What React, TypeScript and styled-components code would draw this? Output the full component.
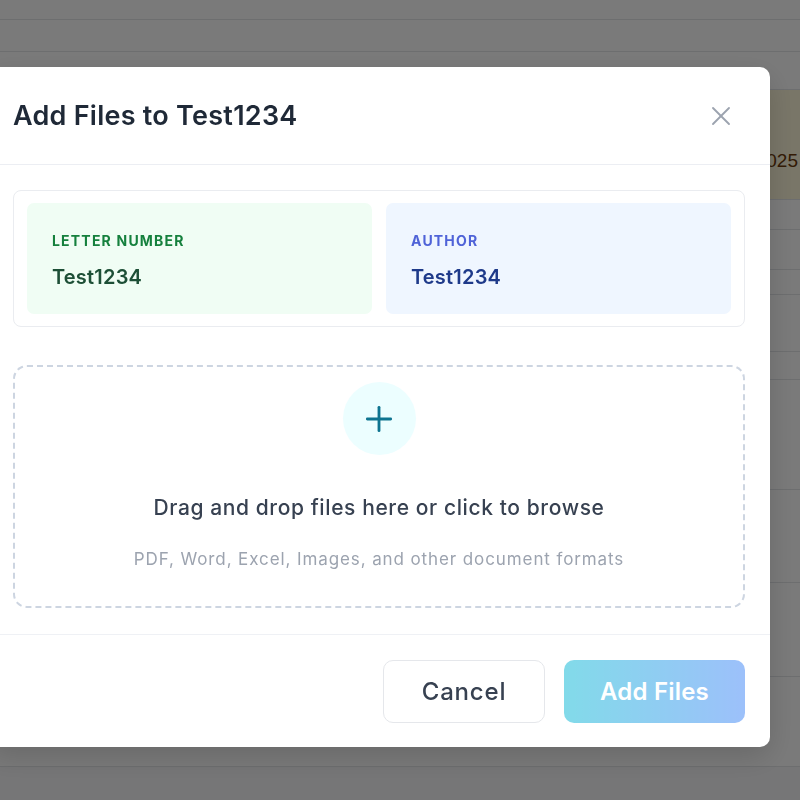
import styled, { createGlobalStyle } from 'styled-components'
import { X, Plus } from 'lucide-react'

const GlobalStyle = createGlobalStyle`
  html, body {
    margin: 0;
    padding: 0;
    overflow: hidden;
    background: #ffffff;
    font-family: "Inter", "Noto Sans", sans-serif;
  }
  * {
    box-sizing: border-box;
  }
`

const rows = [
  { h: 20 },
  { h: 32 },
  { h: 38 },
  { h: 110, highlight: true, date: 'Jan 12, 2025' },
  { h: 30 },
  { h: 40 },
  { h: 25 },
  { h: 57 },
  { h: 28 },
  { h: 110 },
  { h: 93 },
  { h: 94 },
  { h: 90 },
]

export default function App() {
  return (
    <>
      <GlobalStyle />
      <Table>
        {rows.map((r, i) => (
          <Row key={i} $h={r.h} $highlight={r.highlight}>
            {r.date && <DateCell>{r.date}</DateCell>}
          </Row>
        ))}
        <FooterRow />
      </Table>

      <Overlay>
        <Modal>
          <Header>
            <Title>Add Files to Test1234</Title>
            <CloseButton aria-label="Close">
              <X size={32} strokeWidth={1.4} />
            </CloseButton>
          </Header>

          <Body>
            <InfoCard>
              <InfoCell $tone="green">
                <InfoLabel $tone="green">Letter Number</InfoLabel>
                <InfoValue $tone="green">Test1234</InfoValue>
              </InfoCell>
              <InfoCell $tone="blue">
                <InfoLabel $tone="blue">Author</InfoLabel>
                <InfoValue $tone="blue">Test1234</InfoValue>
              </InfoCell>
            </InfoCard>

            <DropZone>
              <PlusCircle>
                <Plus size={40} strokeWidth={1.7} />
              </PlusCircle>
              <DropTitle>Drag and drop files here or click to browse</DropTitle>
              <DropHint>PDF, Word, Excel, Images, and other document formats</DropHint>
            </DropZone>
          </Body>

          <Footer>
            <CancelButton>Cancel</CancelButton>
            <SubmitButton disabled>Add Files</SubmitButton>
          </Footer>
        </Modal>
      </Overlay>
    </>
  )
}

type Tone = 'green' | 'blue'

const tones = {
  green: { bg: '#f0fdf4', label: '#15803d', value: '#1d4f36' },
  blue: { bg: '#eff6ff', label: '#4f63d8', value: '#1e3a8a' },
}

const Table = styled.div`
  display: flex;
  flex-direction: column;
  width: 100%;
  height: 100vh;
`

const Row = styled.div<{ $h: number; $highlight?: boolean }>`
  flex: 0 0 ${p => p.$h}px;
  display: flex;
  justify-content: flex-end;
  align-items: flex-end;
  padding-bottom: ${p => (p.$highlight ? '27px' : '0')};
  border-bottom: 1px solid #e3e5e8;
  background: ${p => (p.$highlight ? '#fdf7da' : '#ffffff')};
`

const FooterRow = styled.div`
  flex: 1;
  background: #f7f7f8;
`

const DateCell = styled.span`
  font-family: "Liberation Sans", sans-serif;
  font-size: 19px;
  color: #6b3a0c;
  margin-right: 2px;
`

const Overlay = styled.div`
  position: fixed;
  inset: 0;
  background: rgba(0, 0, 0, 0.52);
  display: flex;
  align-items: flex-start;
  padding-top: 67px;
`

const Modal = styled.div`
  width: 782px;
  margin-left: -12px;
  background: #ffffff;
  border-radius: 10px;
  display: flex;
  flex-direction: column;
  box-shadow: 0 10px 30px rgba(0, 0, 0, 0.15);
`

const Header = styled.div`
  height: 98px;
  display: flex;
  align-items: center;
  justify-content: space-between;
  padding: 0 33px 0 25px;
  border-bottom: 1px solid #eceef3;
`

const Title = styled.h2`
  margin: 0;
  font-size: 27px;
  font-weight: 600;
  color: #1f2937;
  letter-spacing: 0.25px;
`

const CloseButton = styled.button`
  border: none;
  background: none;
  padding: 0;
  display: flex;
  color: #9ca3af;
  cursor: pointer;
`

const Body = styled.div`
  padding: 25px 25px 26px;
  display: flex;
  flex-direction: column;
  gap: 38px;
`

const InfoCard = styled.div`
  display: grid;
  grid-template-columns: 1fr 1fr;
  gap: 14px;
  padding: 12px 13px;
  border: 1.5px solid #eaecf0;
  border-radius: 8px;
`

const InfoCell = styled.div<{ $tone: Tone }>`
  height: 111px;
  padding: 29px 25px 0;
  border-radius: 7px;
  background: ${p => tones[p.$tone].bg};
  display: flex;
  flex-direction: column;
  gap: 16px;
`

const InfoLabel = styled.span<{ $tone: Tone }>`
  font-size: 14px;
  font-weight: 700;
  letter-spacing: 1.2px;
  text-transform: uppercase;
  color: ${p => tones[p.$tone].label};
`

const InfoValue = styled.span<{ $tone: Tone }>`
  font-size: 20px;
  font-weight: 600;
  letter-spacing: 0.2px;
  color: ${p => tones[p.$tone].value};
`

const DropZone = styled.div`
  height: 243px;
  border: 2px dashed #cdd5e1;
  border-radius: 14px;
  display: flex;
  flex-direction: column;
  align-items: center;
  padding-top: 15px;
  cursor: pointer;
`

const PlusCircle = styled.div`
  width: 73px;
  height: 73px;
  border-radius: 50%;
  background: #ecfeff;
  color: #0e7490;
  display: flex;
  align-items: center;
  justify-content: center;
`

const DropTitle = styled.p`
  margin: 39px 0 0;
  font-size: 21px;
  font-weight: 500;
  letter-spacing: 0.6px;
  color: #374151;
  line-height: 28px;
`

const DropHint = styled.p`
  margin: 26px 0 0;
  font-size: 17px;
  letter-spacing: 0.9px;
  color: #9ca3af;
  line-height: 22px;
`

const Footer = styled.div`
  display: flex;
  justify-content: flex-end;
  gap: 19px;
  padding: 25px 25px 24px;
  border-top: 1.5px solid #eff1f5;
`

const BaseButton = styled.button`
  height: 63px;
  border-radius: 10px;
  font-family: "Inter", "Noto Sans", sans-serif;
  font-size: 24px;
  cursor: pointer;
`

const CancelButton = styled(BaseButton)`
  width: 162px;
  background: #ffffff;
  border: 1.5px solid #e5e7eb;
  color: #374151;
  font-weight: 500;
  letter-spacing: 0.8px;
`

const SubmitButton = styled(BaseButton)`
  width: 181px;
  border: none;
  color: #ffffff;
  font-weight: 600;
  letter-spacing: 0.2px;
  background: linear-gradient(to right, #06b6d4, #3b82f6);
  opacity: 0.5;

  &:disabled {
    cursor: not-allowed;
  }
`
